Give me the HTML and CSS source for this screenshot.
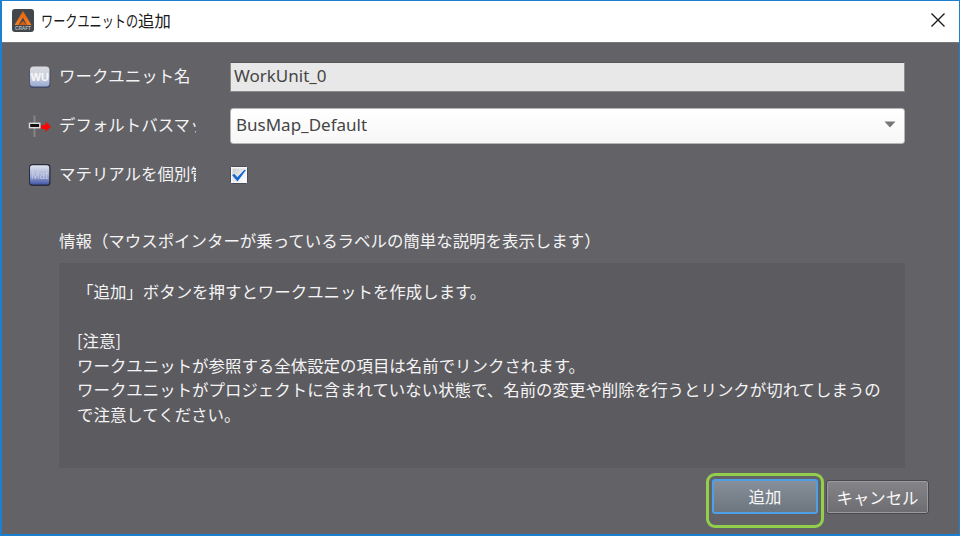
FILE: index.html
```
<!DOCTYPE html>
<html lang="ja">
<head>
<meta charset="utf-8">
<title>ワークユニットの追加</title>
<link rel="stylesheet" href="styles.css">
</head>
<body>
<div class="dialog">
  <header class="titlebar">
    <svg class="app-icon" width="22" height="23" viewBox="0 0 22 23">
      <defs><linearGradient id="flame" x1="0" y1="0" x2="0" y2="1"><stop offset="0" stop-color="#e8640c"/><stop offset="1" stop-color="#f47d20"/></linearGradient></defs>
      <rect width="22" height="23" rx="3" fill="#42474c"/>
      <path d="M11 2 19.500 16H15L11 8.500 6.500 16H2.500Z" fill="url(#flame)"/>
      <path d="M7 16 11 12 15 16Z" fill="#d65d10"/>
      <text x="11" y="21" text-anchor="middle" textLength="16" lengthAdjust="spacingAndGlyphs" class="app-mark">CRAFT</text>
    </svg>
    <h1 class="title"><span class="kana">ワークユニットの</span>追加</h1>
    <svg class="close" width="14" height="14" viewBox="0 0 14 14"><path d="M.5.500 13.500 13.500M13.500.500.500 13.500" stroke="#1c1c1c" stroke-width="1.400"/></svg>
  </header>
  <main class="content">
    <div class="form">
      <div class="row row-name">
        <svg class="row-icon" width="24" height="24" viewBox="0 0 24 24">
          <defs><linearGradient id="wu" x1="0" y1="0" x2="0" y2="1"><stop offset="0" stop-color="#d9dade"/><stop offset=".5" stop-color="#ced2df"/><stop offset="1" stop-color="#98aad2"/></linearGradient></defs>
          <rect x="1.500" y="2" width="21" height="21" rx="4" fill="#444b64"/>
          <rect x="2" y="1.500" width="19.500" height="20" rx="3.500" fill="url(#wu)"/>
          <text x="11.800" y="15.500" text-anchor="middle" textLength="18" lengthAdjust="spacingAndGlyphs" class="wu-mark">WU</text>
        </svg>
        <span class="label">ワークユニット名</span>
        <div class="field">WorkUnit_0</div>
      </div>
      <div class="row row-map">
        <svg class="row-icon" width="24" height="24" viewBox="0 0 24 24">
          <path d="M6.500 1.500V23" stroke="#858585" stroke-width="2"/>
          <rect x="1.500" y="9.300" width="10.300" height="4.400" fill="#111" stroke="#ddd" stroke-width="1.400"/>
          <path d="M13 11H17.500V7.500L23 12.800 17.500 18V15H13Z" fill="#fa0505"/>
        </svg>
        <span class="label">デフォルトバスマップ</span>
        <div class="select"><span>BusMap_Default</span><svg width="12" height="7" viewBox="0 0 12 7"><path d="M.5.500H11.500L6 6.500Z" fill="#777"/></svg></div>
      </div>
      <div class="row row-mat">
        <svg class="row-icon" width="24" height="24" viewBox="0 0 24 24">
          <defs><linearGradient id="mat" x1="0" y1="0" x2="0" y2="1"><stop offset="0" stop-color="#e0e4f0"/><stop offset=".5" stop-color="#a6b0d4"/><stop offset="1" stop-color="#4358a8"/></linearGradient></defs>
          <rect x="1" y="1" width="21.500" height="22" rx="3.500" fill="#292d40"/>
          <rect x="2" y="2.300" width="19.200" height="19.200" rx="2.500" fill="url(#mat)"/>
          <text x="11.500" y="15.500" text-anchor="middle" textLength="17" lengthAdjust="spacingAndGlyphs" class="mat-mark">Mat</text>
        </svg>
        <span class="label">マテリアルを個別管理</span>
        <svg class="check" width="18" height="18" viewBox="0 0 18 18">
          <defs><linearGradient id="box" x1="0" y1="0" x2="1" y2="1"><stop offset="0" stop-color="#ccc"/><stop offset="1" stop-color="#fff"/></linearGradient></defs>
          <rect x=".5" y=".5" width="17" height="17" rx="1" fill="#f7f7f7" stroke="#4b4b5e"/>
          <rect x="2.500" y="2.500" width="13" height="13" fill="url(#box)"/>
          <path d="M2 9 4.500 8 7.300 11.300 14.500 3.800 16 4 7.500 15.500Z" fill="#1267d3"/>
        </svg>
      </div>
    </div>
    <section class="info">
      <h2 class="info-title">情報（マウスポインターが乗っているラベルの簡単な説明を表示します）</h2>
      <div class="info-box">
        <p>「追加」ボタンを押すとワークユニットを作成します。</p>
        <p class="notice">[注意]<br>ワークユニットが参照する全体設定の項目は名前でリンクされます。<br>ワークユニットがプロジェクトに含まれていない状態で、名前の変更や削除を行うとリンクが切れてしまうの<br>で注意してください。</p>
      </div>
    </section>
    <footer class="actions">
      <div class="highlight"><button class="btn primary">追加</button></div>
      <button class="btn">キャンセル</button>
    </footer>
  </main>
</div>
</body>
</html>
```
FILE: styles.css
```
* { box-sizing: border-box; }
body { margin: 0; font-family: "Noto Sans CJK JP", sans-serif; }
h1, h2, p { margin: 0; font-weight: 400; }
svg { display: block; flex: none; }

.dialog {
  width: 960px;
  height: 536px;
  display: flex;
  flex-direction: column;
  border: 1px solid #1b80d0;
  border-left-width: 2px;
  border-bottom-width: 2px;
  background: #636267;
  overflow: hidden;
}

.titlebar {
  flex: none;
  height: 42px;
  display: flex;
  align-items: center;
  padding: 0 14px 3px 10px;
  background: #fff;
  border-bottom: 1px solid #77777a;
}
.app-mark { font: bold 5px "Liberation Sans", sans-serif; fill: #b4b8bc; }
.title {
  flex: 1;
  display: flex;
  margin-left: 7px;
  font: 16.4px/24px "Noto Sans CJK JP", sans-serif;
  color: #1a1a1a;
}
.kana { width: 97px; white-space: nowrap; transform: scaleX(.74); transform-origin: left; }

.content { flex: 1; padding: 19px 30px 0 26px; color: #f4f4f4; font-size: 16.45px; }
.form { display: flex; flex-direction: column; height: 166px; }
.row { display: flex; align-items: center; height: 49px; flex: none; padding-bottom: 19px; }
.row-map { padding: 0; margin-top: -10px; }
.row-mat { padding: 0; }
.label {
  width: 137px;
  height: 26px;
  margin: 0 34px 0 7px;
  line-height: 23px;
  overflow: hidden;
  white-space: nowrap;
}
.row-map .label, .row-mat .label { line-height: 22px; }
.wu-mark { font: bold 11px "Liberation Sans", sans-serif; fill: #f7f7f8; }
.mat-mark { font: 10.5px "Liberation Sans", sans-serif; fill: #c7cde6; }

.field, .select { width: 675px; font: 17px "Noto Sans", sans-serif; color: #454545; }
.field { height: 30px; line-height: 26px; padding-left: 3px; background: #e8e8e8; border: 1px solid #8c8c8c; border-top-color: #555; }
.select {
  height: 36px;
  display: flex;
  align-items: center;
  justify-content: space-between;
  padding: 0 8px 2px 5px;
  border: 1px solid #b5b5b5;
  border-radius: 3px;
  background: linear-gradient(#fff, #f7f7f7);
}

.info { margin-left: 31px; }
.info-title { font-size: 16.45px; line-height: 24px; white-space: nowrap; }
.info-box { width: 846px; height: 205px; margin-top: 11px; padding: 16px 0 0 18px; background: #5c5b60; line-height: 24.6px; white-space: nowrap; }
.notice { margin-top: 24.6px; }

.actions { display: flex; justify-content: flex-end; margin-top: 5px; gap: 2px; }
.highlight { width: 118px; height: 55px; padding: 3px; border: 3px solid #92d04c; border-radius: 9px; }
.btn {
  width: 103px;
  height: 34px;
  margin-top: 7px;
  padding: 0 0 1px;
  border: 1px solid #49494c;
  border-radius: 3px;
  box-shadow: inset 0 0 0 1px #9b9b9e;
  background: linear-gradient(#858488, #6d6c70);
  color: #f8f8f8;
  font: 16.4px "Noto Sans CJK JP", sans-serif;
}
.btn.primary { width: 106px; height: 35px; margin: 0; border: 2px solid #4d9fe6; box-shadow: none; background: linear-gradient(#87909a, #6d757e); }
```
